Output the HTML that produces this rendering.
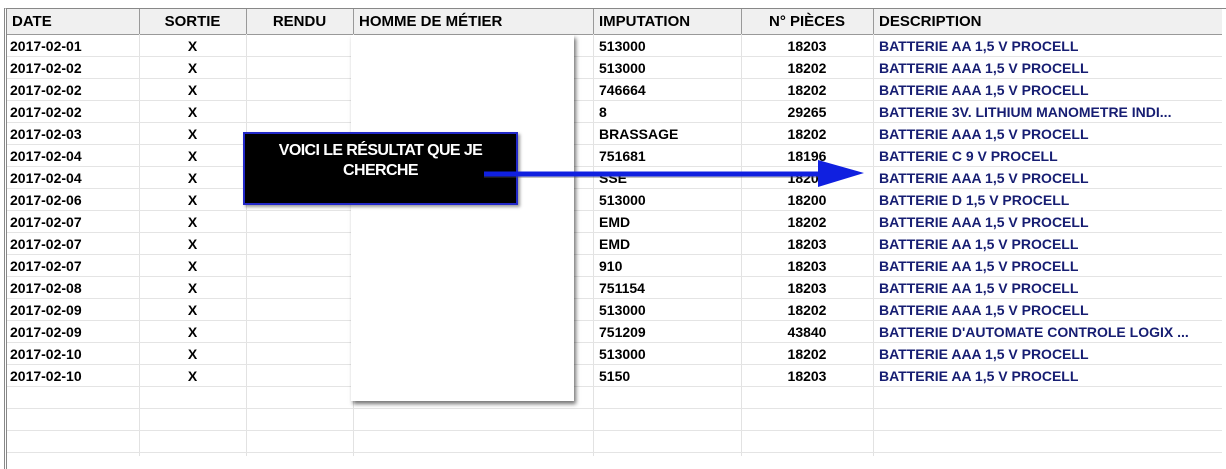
<!DOCTYPE html>
<html><head><meta charset="utf-8"><style>
body{margin:0;width:1226px;height:456px;background:#fff;overflow:hidden;position:relative;font-family:"Liberation Sans",Arial,sans-serif;}
.frame{position:absolute;left:4px;top:8px;width:1219px;height:460px;border-left:3px double #888;border-top:1px solid #888;border-right:1px solid #aaa;}
.hdr{position:absolute;top:9px;left:7px;width:1215px;height:25px;background:#f0f0f0;border-bottom:1px solid #999;}
.vl{position:absolute;top:9px;width:1px;height:447px;background:#e2e2e2;}
.vh{position:absolute;top:9px;width:1px;height:25px;background:#999;}
.hl{position:absolute;left:7px;width:1215px;height:1px;background:#e4e4e4;}
.t{position:absolute;font-weight:bold;font-size:14px;color:#000;white-space:nowrap;line-height:22px;}
.h{font-size:15px;line-height:25px;top:9px;}
.d{color:#161d72;}
</style></head><body>
<div class="frame"></div>
<div class="hdr"></div>
<div id="g"></div>
<div style="position:absolute;left:351px;top:35px;width:223px;height:366px;background:#fff;box-shadow:2px 3px 4px rgba(0,0,0,.55);"></div>
<div style="position:absolute;left:243px;top:132px;background:#000;border:2px solid #2228c8;color:#fff;font-size:16px;font-weight:bold;letter-spacing:-0.6px;text-align:center;line-height:20px;box-sizing:border-box;width:275px;height:73px;padding:7px 10px 0;box-shadow:2px 2px 3px rgba(0,0,0,.4);">VOICI LE RÉSULTAT QUE JE<br>CHERCHE</div>
<svg style="position:absolute;left:0;top:0" width="1226" height="456">
<line x1="484" y1="176" x2="830" y2="176" stroke="#555" stroke-width="4" opacity=".35"/>
<line x1="484" y1="174" x2="830" y2="174" stroke="#1020e0" stroke-width="5"/>
<polygon points="818,160 864,173 818,187" fill="#1020e0"/>
</svg>
<script>
var cols=[7,139,246,353,593,741,873,1222];
var g='';
for(var i=1;i<7;i++){g+='<div class="vl" style="left:'+cols[i]+'px"></div><div class="vh" style="left:'+cols[i]+'px"></div>';}
for(var k=1;k<20;k++){g+='<div class="hl" style="top:'+(34+22*k)+'px"></div>';}
var hd=[['DATE',12,'l'],['SORTIE',1,'c'],['RENDU',2,'c'],['HOMME DE MÉTIER',359,'l'],['IMPUTATION',599,'l'],['N° PIÈCES',5,'c'],['DESCRIPTION',879,'l']];
hd.forEach(function(h,i){
 if(h[2]=='c'){g+='<div class="t h" style="left:'+cols[i]+'px;width:'+(cols[i+1]-cols[i])+'px;text-align:center">'+h[0]+'</div>';}
 else g+='<div class="t h" style="left:'+h[1]+'px">'+h[0]+'</div>';
});
var rows=[['2017-02-01','513000','18203','BATTERIE AA 1,5 V PROCELL'],['2017-02-02','513000','18202','BATTERIE AAA 1,5 V PROCELL'],['2017-02-02','746664','18202','BATTERIE AAA 1,5 V PROCELL'],['2017-02-02','8','29265','BATTERIE 3V. LITHIUM MANOMETRE INDI...'],['2017-02-03','BRASSAGE','18202','BATTERIE AAA 1,5 V PROCELL'],['2017-02-04','751681','18196','BATTERIE C 9 V PROCELL'],['2017-02-04','SSE','18202','BATTERIE AAA 1,5 V PROCELL'],['2017-02-06','513000','18200','BATTERIE D 1,5 V PROCELL'],['2017-02-07','EMD','18202','BATTERIE AAA 1,5 V PROCELL'],['2017-02-07','EMD','18203','BATTERIE AA 1,5 V PROCELL'],['2017-02-07','910','18203','BATTERIE AA 1,5 V PROCELL'],['2017-02-08','751154','18203','BATTERIE AA 1,5 V PROCELL'],['2017-02-09','513000','18202','BATTERIE AAA 1,5 V PROCELL'],['2017-02-09','751209','43840',"BATTERIE D'AUTOMATE CONTROLE LOGIX ..."],['2017-02-10','513000','18202','BATTERIE AAA 1,5 V PROCELL'],['2017-02-10','5150','18203','BATTERIE AA 1,5 V PROCELL']];
rows.forEach(function(r,i){var y=35+22*i;
 g+='<div class="t" style="top:'+y+'px;left:10px">'+r[0]+'</div>';
 g+='<div class="t" style="top:'+y+'px;left:139px;width:107px;text-align:center">X</div>';
 g+='<div class="t" style="top:'+y+'px;left:599px">'+r[1]+'</div>';
 g+='<div class="t" style="top:'+y+'px;left:741px;width:132px;text-align:center">'+r[2]+'</div>';
 g+='<div class="t d" style="top:'+y+'px;left:879px">'+r[3]+'</div>';
});
document.getElementById('g').innerHTML=g;
</script>
</body></html>
